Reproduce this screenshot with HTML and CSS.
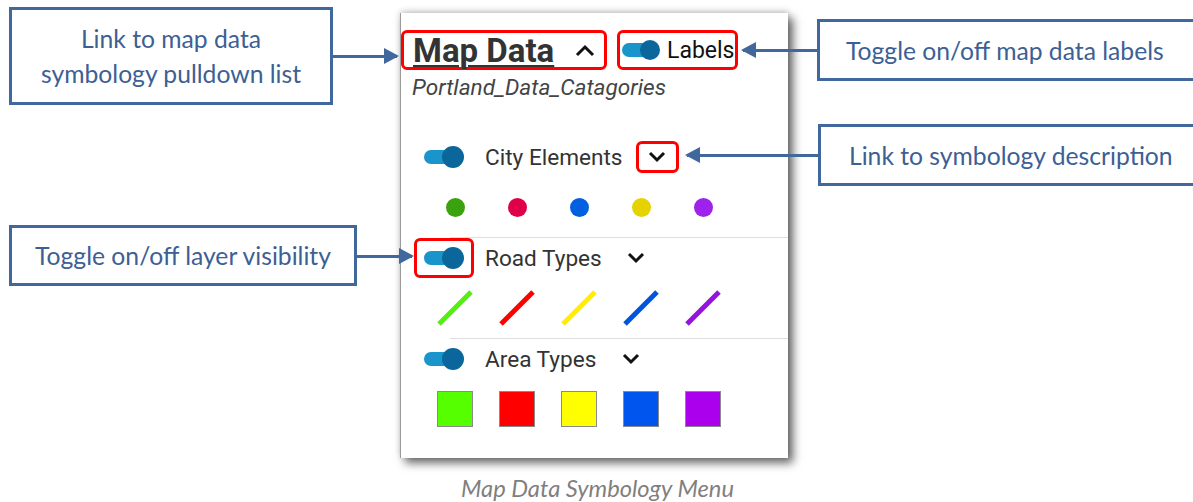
FILE: index.html
```html
<!DOCTYPE html>
<html lang="en">
<head>
    <meta charset="UTF-8">
    <meta name="viewport" content="width=device-width, initial-scale=1.0">
    <title>Map Data Symbology Menu</title>
    <link rel="stylesheet" href="styles.css">
</head>
<body>
    <div class="stage">

        <!-- the menu itself -->
        <div class="panel">
            <div class="head">
                <div class="title-box hl">
                    <span class="title">Map Data</span>
                    <svg class="chev-up" width="22" height="14" viewBox="0 0 22 14"><polyline points="3,12 11,4 19,12" fill="none" stroke="#111" stroke-width="3"/></svg>
                </div>
                <div class="labels-box hl">
                    <span class="toggle small"></span>
                    <span class="labels">Labels</span>
                </div>
            </div>
            <div class="subtitle">Portland_Data_Catagories</div>

            <div class="layer first">
                <div class="layer-row">
                    <span class="toggle-wrap"><span class="toggle"></span></span>
                    <span class="layer-name">City Elements</span>
                    <span class="chev hl"><svg width="20" height="14" viewBox="0 0 20 14"><polyline points="3,3 10,10 17,3" fill="none" stroke="#111" stroke-width="3"/></svg></span>
                </div>
                <div class="swatches">
                    <span class="cell"><span class="dot" style="background:#3aa20f"></span></span>
                    <span class="cell"><span class="dot" style="background:#e0004a"></span></span>
                    <span class="cell"><span class="dot" style="background:#0060e0"></span></span>
                    <span class="cell"><span class="dot" style="background:#e5d200"></span></span>
                    <span class="cell"><span class="dot" style="background:#9e22ee"></span></span>
                </div>
            </div>

            <div class="layer">
                <div class="layer-row">
                    <span class="toggle-wrap hl"><span class="toggle"></span></span>
                    <span class="layer-name">Road Types</span>
                    <span class="chev"><svg width="20" height="14" viewBox="0 0 20 14"><polyline points="3,3 10,10 17,3" fill="none" stroke="#111" stroke-width="3"/></svg></span>
                </div>
                <div class="swatches">
                    <span class="cell"><svg width="40" height="40" viewBox="0 0 40 40"><line x1="4" y1="36" x2="36" y2="4" stroke="#55ee11" stroke-width="5"/></svg></span>
                    <span class="cell"><svg width="40" height="40" viewBox="0 0 40 40"><line x1="4" y1="36" x2="36" y2="4" stroke="#ff0000" stroke-width="5"/></svg></span>
                    <span class="cell"><svg width="40" height="40" viewBox="0 0 40 40"><line x1="4" y1="36" x2="36" y2="4" stroke="#ffee00" stroke-width="5"/></svg></span>
                    <span class="cell"><svg width="40" height="40" viewBox="0 0 40 40"><line x1="4" y1="36" x2="36" y2="4" stroke="#0055dd" stroke-width="5"/></svg></span>
                    <span class="cell"><svg width="40" height="40" viewBox="0 0 40 40"><line x1="4" y1="36" x2="36" y2="4" stroke="#9911dd" stroke-width="5"/></svg></span>
                </div>
            </div>

            <div class="layer">
                <div class="layer-row">
                    <span class="toggle-wrap"><span class="toggle"></span></span>
                    <span class="layer-name">Area Types</span>
                    <span class="chev"><svg width="20" height="14" viewBox="0 0 20 14"><polyline points="3,3 10,10 17,3" fill="none" stroke="#111" stroke-width="3"/></svg></span>
                </div>
                <div class="swatches">
                    <span class="cell"><span class="square" style="background:#55ff00"></span></span>
                    <span class="cell"><span class="square" style="background:#ff0000"></span></span>
                    <span class="cell"><span class="square" style="background:#ffff00"></span></span>
                    <span class="cell"><span class="square" style="background:#0055ee"></span></span>
                    <span class="cell"><span class="square" style="background:#aa00ee"></span></span>
                </div>
            </div>
        </div>

        <!-- callouts -->
        <div class="callout c-pulldown">Link to map data<br>symbology pulldown list</div>
        <div class="arrow to-right a-pulldown"></div>

        <div class="callout c-labels">Toggle on/off map data labels</div>
        <div class="arrow to-left a-labels"></div>

        <div class="callout c-desc">Link to symbology description</div>
        <div class="arrow to-left a-desc"></div>

        <div class="callout c-visible">Toggle on/off layer visibility</div>
        <div class="arrow to-right a-visible"></div>

        <div class="caption">Map Data Symbology Menu</div>
    </div>
</body>
</html>
```

FILE: styles.css
```css
body {
    margin: 0;
    background: #fff;
}
.stage {
    position: relative;
    width: 1193px;
    height: 502px;
    overflow: hidden;
    padding-top: 13px;
    box-sizing: border-box;
}

/* menu panel */
.panel {
    margin-left: 400px;
    width: 388px;
    height: 445px;
    box-sizing: border-box;
    border-left: 1px solid #9a9a9a;
    background: #fff;
    padding-top: 17px;
    font-family: Roboto, "Liberation Sans", sans-serif;
    color: #333;
    box-shadow: 5px 5px 9px rgba(0,0,0,0.6), 0 -2px 6px rgba(0,0,0,0.18);
}
.hl {
    border: 3px solid #f00 !important;
    border-radius: 6px;
}
.head {
    display: flex;
    gap: 10px;
}
.title-box {
    width: 206px;
    height: 40px;
    box-sizing: border-box;
    border: 3px solid transparent;
    display: flex;
    align-items: center;
    padding-left: 9px;
}
.title {
    font-size: 33px;
    font-weight: bold;
    text-decoration: underline;
    text-decoration-thickness: 2px;
    text-underline-offset: 3px;
    color: #333;
}
.chev-up {
    margin-left: 20px;
}
.labels-box {
    width: 121px;
    height: 40px;
    box-sizing: border-box;
    display: flex;
    align-items: center;
    padding-left: 2px;
    gap: 7px;
}
.labels {
    font-size: 23px;
    color: #111;
}
.subtitle {
    margin: 3px 0 0 11px;
    line-height: 30px;
    font-size: 22.6px;
    font-style: italic;
    color: #444;
}

/* toggles */
.toggle {
    position: relative;
    display: inline-block;
    width: 40px;
    height: 22px;
}
.toggle::before {
    content: "";
    position: absolute;
    left: 0;
    top: 4px;
    width: 30px;
    height: 14px;
    border-radius: 7px;
    background: #1a95cc;
}
.toggle::after {
    content: "";
    position: absolute;
    right: 0;
    top: 0;
    width: 22px;
    height: 22px;
    border-radius: 50%;
    background: #0b669c;
}
.toggle.small {
    width: 38px;
    height: 20px;
}
.toggle.small::before {
    top: 3px;
    width: 28px;
}
.toggle.small::after {
    width: 20px;
    height: 20px;
}

/* layer sections */
.layer {
    padding-left: 13px;
}
.layer.first {
    margin-top: 34px;
}
.layer + .layer {
    border-top: 1px solid #dedede;
    margin-left: 49px;
    padding-left: 0;
}
.layer + .layer .layer-row {
    margin-left: -36px;
}
.layer + .layer .swatches {
    margin-left: -26px;
}
.layer-row {
    height: 40px;
    display: flex;
    align-items: center;
}
.toggle-wrap {
    width: 60px;
    height: 40px;
    box-sizing: border-box;
    border: 3px solid transparent;
    display: flex;
    align-items: center;
    justify-content: center;
}
.layer-name {
    margin-left: 11px;
    font-size: 22.6px;
    color: #333;
}
.chev {
    margin-left: 13px;
    width: 43px;
    height: 32px;
    box-sizing: border-box;
    border: 3px solid transparent;
    display: flex;
    align-items: center;
    justify-content: center;
}
.swatches {
    height: 60px;
    display: flex;
    align-items: center;
    margin-left: 10px;
}
.cell {
    width: 62px;
    display: flex;
    justify-content: center;
    align-items: center;
}
.dot {
    width: 19px;
    height: 19px;
    border-radius: 50%;
}
.square {
    width: 36px;
    height: 36px;
    box-sizing: border-box;
    border: 1px solid #8a8a8a;
}

/* callouts */
.callout {
    position: absolute;
    box-sizing: border-box;
    border: 3px solid #41689c;
    background: #fff;
    font-family: Lato, "Open Sans", sans-serif;
    font-size: 24.7px;
    color: #3d6094;
    display: flex;
    align-items: center;
    justify-content: center;
    text-align: center;
    line-height: 35px;
}
.c-pulldown { left: 9px; top: 7px; width: 324px; height: 98px; }
.c-labels { left: 817px; top: 19px; width: 420px; height: 62px; justify-content: flex-start; padding-left: 26px; }
.c-desc { left: 818px; top: 124px; width: 420px; height: 62px; justify-content: flex-start; padding-left: 28px; }
.c-visible { left: 9px; top: 225px; width: 348px; height: 61px; }

.arrow {
    position: absolute;
    height: 3px;
    background: #41689c;
}
.arrow::after {
    content: "";
    position: absolute;
    top: -7px;
    border-top: 8px solid transparent;
    border-bottom: 8px solid transparent;
}
.arrow.to-right::after {
    right: -2px;
    border-left: 15px solid #41689c;
}
.arrow.to-left::after {
    left: -2px;
    border-right: 15px solid #41689c;
}
.a-pulldown { left: 333px; top: 55px; width: 64px; }
.a-labels { left: 743px; top: 49px; width: 75px; }
.a-desc { left: 687px; top: 154px; width: 132px; }
.a-visible { left: 357px; top: 255px; width: 55px; }

.caption {
    position: absolute;
    left: 0;
    right: 0;
    top: 474px;
    text-align: center;
    padding-left: 2px;
    font-family: Lato, "Open Sans", sans-serif;
    font-style: italic;
    font-size: 23.7px;
    color: #7f7f7f;
}
```
